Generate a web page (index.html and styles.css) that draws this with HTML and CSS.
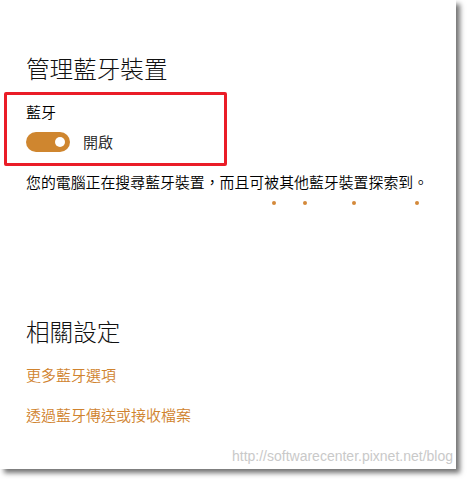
FILE: index.html
```html
<!DOCTYPE html>
<html lang="zh-Hant">
<head>
<meta charset="utf-8">
<link rel="stylesheet" href="styles.css">
</head>
<body>
<div class="panel">
  <h1 class="title">管理藍牙裝置</h1>
  <div class="highlight">
    <div class="label">藍牙</div>
    <div class="toggle-row">
      <span class="toggle"><span class="knob"></span></span>
      <span class="state">開啟</span>
    </div>
  </div>
  <p class="desc">您的電腦正在搜尋藍牙裝置，而且可被其他藍牙裝置探索到。</p>
  <div class="progress">
    <span class="dot" style="left:272px"></span>
    <span class="dot" style="left:303px"></span>
    <span class="dot" style="left:352px"></span>
    <span class="dot" style="left:415px"></span>
  </div>
  <h2 class="title related">相關設定</h2>
  <a class="link first">更多藍牙選項</a>
  <a class="link">透過藍牙傳送或接收檔案</a>
  <div class="watermark">http://softwarecenter.pixnet.net/blog</div>
</div>
</body>
</html>
```
FILE: styles.css
```css
* { box-sizing: border-box; }
html, body { margin: 0; padding: 0; background: #ffffff; }
body {
  width: 467px;
  height: 479px;
  font-family: "Noto Sans CJK TC", "Microsoft JhengHei", sans-serif;
  color: #000;
}
.panel {
  position: relative;
  width: 456px;
  height: 469px;
  background: #fff;
  box-shadow: 4px 4px 5px rgba(0, 0, 0, 0.55);
  padding-top: 52px;
  display: flex;
  flex-direction: column;
}
.title {
  margin: 0 0 0 26px;
  font-size: 23.6px;
  line-height: 32px;
  font-weight: 300;
  color: #111;
}
.highlight {
  margin: 8px 0 0 4px;
  width: 223px;
  border: 3px solid #ea1d27;
  border-radius: 2px;
  padding: 7px 0 11px 19px;
}
.label {
  font-size: 15px;
  line-height: 20px;
  font-weight: 350;
}
.toggle-row {
  margin-top: 10px;
  display: flex;
  align-items: center;
  height: 20px;
}
.toggle {
  width: 44px;
  height: 20px;
  border-radius: 10px;
  background: #cf862f;
  position: relative;
  display: inline-block;
}
.knob {
  position: absolute;
  right: 5px;
  top: 5px;
  width: 10px;
  height: 10px;
  border-radius: 50%;
  background: #fff;
}
.state {
  margin-left: 13px;
  font-size: 15px;
  line-height: 20px;
  font-weight: 350;
  color: #222;
}
.desc {
  margin: 6px 0 0 26px;
  font-size: 14.9px;
  line-height: 20px;
  font-weight: 350;
}
.progress {
  position: relative;
  height: 4px;
  margin-top: 9px;
}
.dot {
  position: absolute;
  top: 0;
  width: 4px;
  height: 4px;
  border-radius: 50%;
  background: #d4893a;
}
.related {
  margin-top: 110px;
}
.link {
  display: block;
  margin-left: 26px;
  font-size: 15px;
  line-height: 20px;
  font-weight: 350;
  color: #d0832e;
  text-decoration: none;
}
.link.first { margin-top: 18px; }
.link + .link { margin-top: 20px; }
.watermark {
  position: absolute;
  right: 3px;
  bottom: 5px;
  font-family: "Liberation Sans", Arial, sans-serif;
  font-size: 14px;
  color: #c9c9c9;
}
```
